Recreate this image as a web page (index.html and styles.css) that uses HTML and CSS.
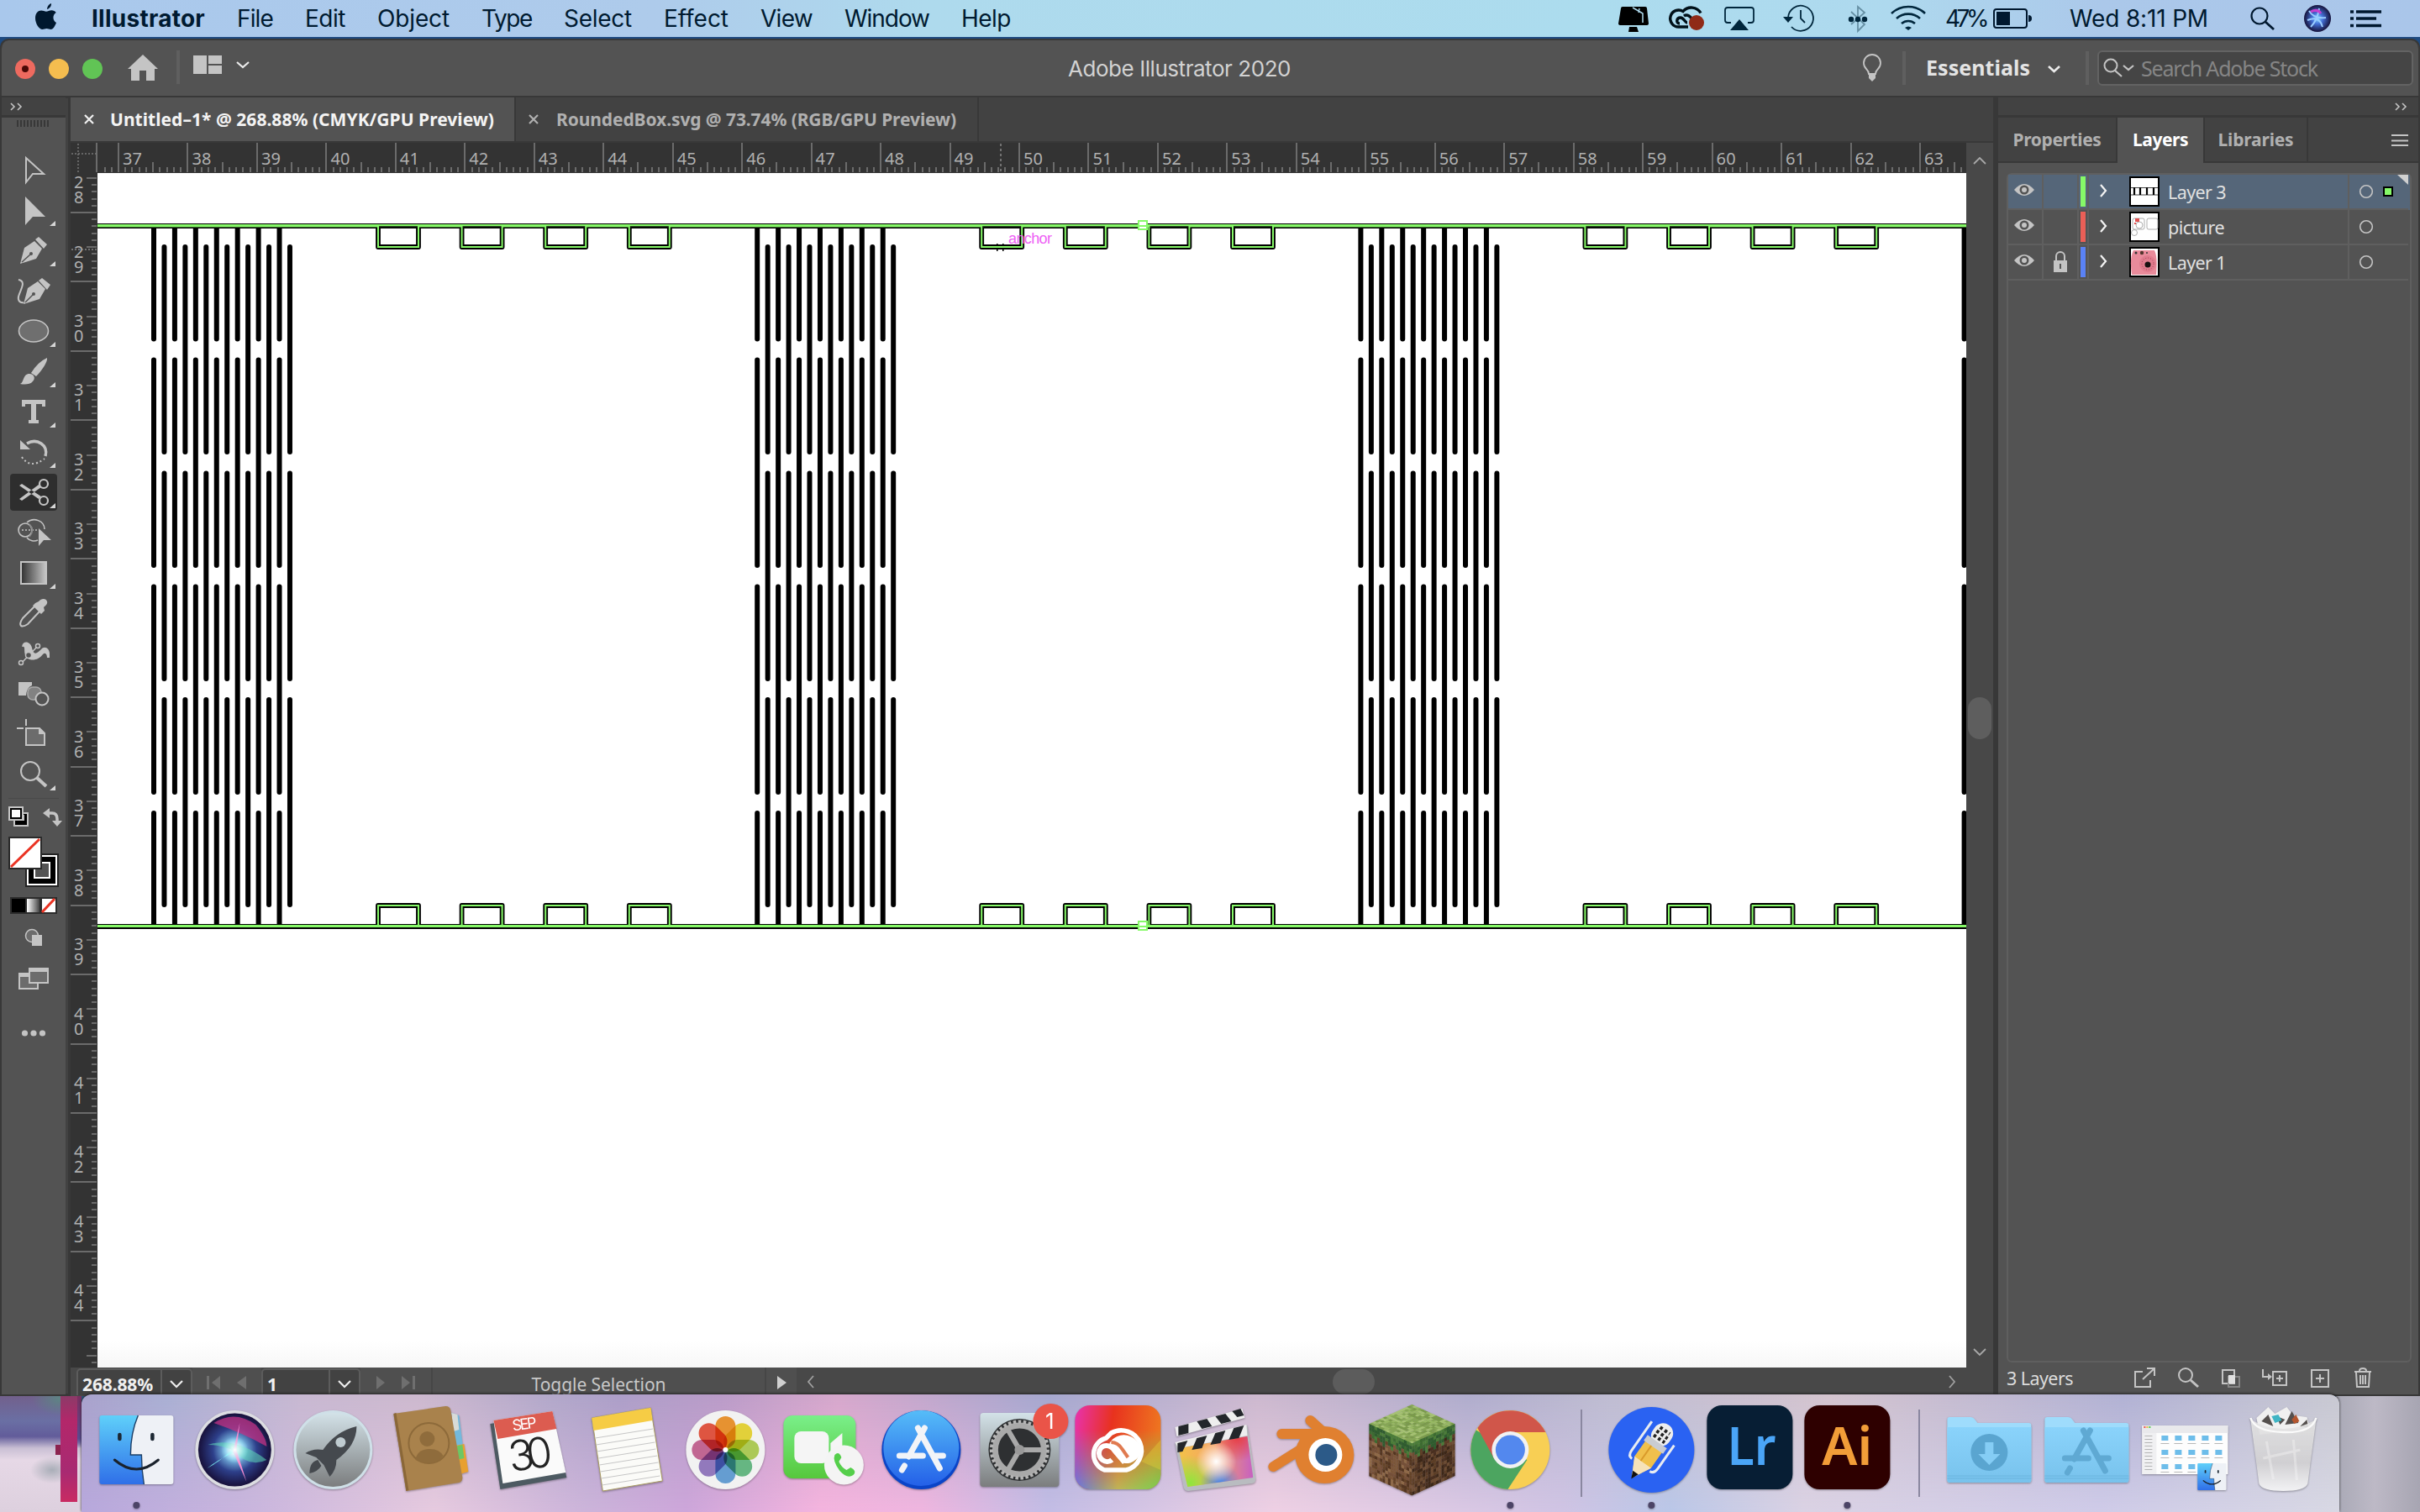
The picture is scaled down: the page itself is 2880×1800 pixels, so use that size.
FILE: index.html
```html
<!DOCTYPE html>
<html lang="en">
<head>
<meta charset="utf-8">
<title>Adobe Illustrator 2020</title>
<link rel="stylesheet" href="styles.css">
</head>
<body>
<header class="menubar">
  <svg class="apple" width="26" height="32" viewBox="42 4 26 32"><path d="M56 11c0-3 2-6 5-7 .4 3-2 6.500-5 7zM67 27c-2 5-4 8-6.500 8-2 0-3-1-5-1s-3 1-5 1c-4 0-8.500-7-8.500-13.500 0-6 3.500-9 7-9 2.500 0 4 1.200 6 1.200s3.500-1.400 6.500-1.400c2 0 4 1 5.200 2.700-4.700 3-4 9.500.3 12z" fill="#00182f"/></svg>
  <nav class="menus">
    <b data-w="135">Illustrator</b><span data-w="43">File</span><span data-w="48">Edit</span><span data-w="86">Object</span><span data-w="60">Type</span><span data-w="81">Select</span><span data-w="77">Effect</span><span data-w="62">View</span><span data-w="101">Window</span><span data-w="59">Help</span>
  </nav>
  <svg class="status" width="400" height="44" viewBox="1915 0 400 44">
    <path d="M1931 8h27q2 0 2 2l2 18q0 2-3 2h-30q-3 0-3-2l3-18q0-2 2-2zM1939 32h9l2 6h-12z" fill="#000"/>
    <path d="M1943 9l12 7v11m-4-17l-1 5" stroke="#aedaed" stroke-width="1.500" fill="none"/>
    <g fill="none" stroke="#001018" stroke-width="3.400"><path d="M2009 32h-11a10 10 0 1 1 5-18.500 13 13 0 0 1 21 2"/><path d="M2008 27c-3 0-4-6-8-6-5 0-6 7-1 7M2004 19c4-3 8 1 10 4"/></g>
    <circle cx="2019" cy="27" r="9" fill="#8f2a17"/>
    <path d="M2060 27h-4q-3 0-3-3v-12q0-3 3-3h28q3 0 3 3v12q0 3-3 3h-4" fill="none" stroke="#00263c" stroke-width="1.800"/><path d="M2059 36l11-13 11 13z" fill="#00263c"/>
    <path d="M2128 21a15 15 0 1 1 4 11M2143 12v10l5 5" fill="none" stroke="#00263c" stroke-width="1.800"/><path d="M2122 20h12l-6 7z" fill="#00263c"/>
    <path d="M2203 14l16 15-8 8V8l8 7-16 14" fill="none" stroke="#6690a4" stroke-width="1.800"/><g fill="#00263c"><circle cx="2203" cy="23" r="3.200"/><circle cx="2211" cy="23" r="3.200"/><circle cx="2219" cy="23" r="3.200"/></g>
    <g fill="none" stroke="#00263c" stroke-width="2.600"><path d="M2251 16a29 29 0 0 1 40 0M2257 22a21 21 0 0 1 28 0M2263 28a12 12 0 0 1 16 0"/></g><path d="M2267 33q4-3 8 0l-4 3z" fill="#00263c"/>
  </svg>
  <span class="pct" data-w="48">47%</span>
  <svg class="batt" width="46" height="26" viewBox="2372 9 46 26"><rect x="2373" y="11" width="39" height="22" rx="3" fill="none" stroke="#00182f" stroke-width="2"/><rect x="2376" y="14" width="16" height="16" fill="#00182f"/><path d="M2414 18q4 0 4 4t-4 4z" fill="#00182f"/></svg>
  <span class="clock" data-w="165">Wed 8:11 PM</span>
  <svg class="right" width="170" height="44" viewBox="2670 0 170 44">
    <circle cx="2689" cy="19" r="9.500" fill="none" stroke="#00182f" stroke-width="2.200"/><path d="M2696 26l10 9" stroke="#00182f" stroke-width="2.800"/>
    <defs><radialGradient id="sm"><stop offset="0" stop-color="#8ee4ff"/><stop offset=".4" stop-color="#4470d8"/><stop offset="1" stop-color="#15123a"/></radialGradient></defs>
    <circle cx="2758" cy="22" r="16" fill="url(#sm)"/><path d="M2748 13q6 10 20 8M2750 32q8-8 10-22M2746 24q14-6 18 8" stroke="#9cf" stroke-width="2" fill="none"/><path d="M2750 14q8-4 12 2" stroke="#c53fd0" stroke-width="3" fill="none"/>
    <path d="M2804 14h30M2804 22h24M2804 30.500h30M2797 14h4M2797 22h4M2797 30.500h4" stroke="#00182f" stroke-width="3.600"/>
  </svg>
</header>

<main class="window">
  <div class="titlebar">
    <svg class="tb-left" width="310" height="66" viewBox="0 48 310 66">
      <circle cx="30" cy="82" r="12" fill="#ee6a5f"/><circle cx="30" cy="82" r="4" fill="#4b0906"/><circle cx="70" cy="82" r="12" fill="#f5bd4f"/><circle cx="110" cy="82" r="12" fill="#61c455"/>
      <path d="M170 65l18 17h-4v14h-10V84h-8v12h-10V82h-4z" fill="#c4c4c4"/>
      <path d="M212 60v40" stroke="#5f5f5f" stroke-width="4"/>
      <path d="M230 66h16v22h-16zM248 66h16v10h-16zM248 78h16v10h-16z" fill="#c4c4c4"/>
      <path d="M282 74l7 6 7-6" fill="none" stroke="#ececec" stroke-width="2.200"/>
    </svg>
    <h1 data-w="265">Adobe Illustrator 2020</h1>
    <svg class="bulb" width="60" height="44" viewBox="2212 58 60 44"><path d="M2224 87q0-3-3-6-3-3-3-7a10 10 0 0 1 20 0q0 4-3 7-3 3-3 6z" fill="none" stroke="#c4c4c4" stroke-width="1.800"/><path d="M2224 86h8v6l-4 4-4-4z" fill="#c4c4c4"/><path d="M2266 60v40" stroke="#5f5f5f" stroke-width="4"/></svg>
    <b class="ess" data-w="124">Essentials</b>
    <svg class="esschev" width="60" height="44" viewBox="2430 58 60 44"><path d="M2438 78l6.500 6 6.500-6" fill="none" stroke="#ececec" stroke-width="2.600"/><path d="M2484 60v40" stroke="#5f5f5f" stroke-width="4"/></svg>
    <div class="search"><svg width="42" height="32" viewBox="2502 65 42 32"><circle cx="2512" cy="78" r="7.500" fill="none" stroke="#c4c4c4" stroke-width="2"/><path d="M2517 84l8 7M2527 78l6 5 6-5" fill="none" stroke="#c4c4c4" stroke-width="2.200"/></svg><span data-w="210">Search Adobe Stock</span></div>
  </div>
  <div class="work">
    <aside class="tools">
      <div class="phead"><svg width="16" height="10" viewBox="0 0 16 10"><path d="M1 1l4 4-4 4M9 1l4 4-4 4" fill="none" stroke="#c4c4c4" stroke-width="1.600"/></svg></div>
      <div class="grip"></div>
      <div class="toolgrid">
        <svg viewBox="2 179 76 48"><path d="M31 188v29l8-10h13z" fill="none" stroke="#c4c4c4" stroke-width="2"/></svg>
        <svg viewBox="2 227 76 48"><path d="M30 234v34l9-10h15z"/><path class="cn" d="M66 263v6h-7z"/></svg>
        <svg viewBox="2 275 76 48"><path d="M24 314l5-19 12-8 9 9-7 12zM42 285l4-3 10 9-4 5z"/><path d="M26 312l10-9" stroke="#535353" stroke-width="1.500"/><circle cx="37" cy="302" r="2" fill="#535353"/><path class="cn" d="M66 311v6h-7z"/></svg>
        <svg viewBox="2 323 76 48"><path d="M28 362l5-19 12-8 9 9-7 12zM46 334l4-3 10 8-4 6z"/><path d="M30 360l9-9" stroke="#535353" stroke-width="1.500"/><circle cx="40" cy="350" r="2" fill="#535353"/><path d="M22 333c10 2 2 12 0 20-1 5 2 8 6 7" fill="none" stroke="#c4c4c4" stroke-width="2"/></svg>
        <svg viewBox="2 371 76 48"><ellipse cx="40" cy="394" rx="17.500" ry="13" fill="#6f6f6f" stroke="#c4c4c4" stroke-width="1.600"/><path class="cn" d="M66 407v6h-7z"/></svg>
        <svg viewBox="2 419 76 48"><path d="M37 444q8-13 19-18c1 4-5 14-13 22zM24 457c5-2 3-12 11-12 5 0 8 5 4 9-3 4-10 4-15 3z"/><path class="cn" d="M66 455v6h-7z"/></svg>
        <svg viewBox="2 467 76 48"><path d="M26 476h28v8h-4v-3h-7v19h3v4h-12v-4h3v-19h-7v3h-4z"/><path class="cn" d="M66 503v6h-7z"/></svg>
        <svg viewBox="2 515 76 48"><path d="M54 543c4-13-10-22-22-15" fill="none" stroke="#c4c4c4" stroke-width="3.500"/><path d="M24 524v11h12z"/><path d="M26 544q10 15 27 2" fill="none" stroke="#c4c4c4" stroke-width="2" stroke-dasharray="2 3"/><path class="cn" d="M66 551v6h-7z"/></svg>
        <svg viewBox="2 563 76 48"><rect x="12" y="564" width="56" height="44" rx="4" fill="#2e2e2e"/><path d="M23 578l3-2 23 15-3 3zM23 594l3 2 23-16-3-3z"/><g fill="none" stroke="#c4c4c4" stroke-width="2.200"><circle cx="52" cy="576" r="5"/><circle cx="52" cy="596" r="5"/></g><path class="cn" d="M66 599v6h-7z"/></svg>
        <svg viewBox="2 611 76 48"><g fill="none" stroke="#c4c4c4" stroke-width="1.600"><circle cx="30" cy="631" r="8"/><path d="M32 622c8-7 21-2 21 8M32 640c3 4 9 5 13 3"/><path d="M26 631h18" stroke-dasharray="2 2"/><path d="M35 624q7 7 0 15" stroke="#858585"/></g><path d="M46 629v21l6-7h9z"/></svg>
        <svg viewBox="2 659 76 48"><defs><linearGradient id="gr"><stop stop-color="#303030"/><stop offset="1" stop-color="#c8c8c8"/></linearGradient></defs><rect x="25" y="669" width="30" height="26" fill="url(#gr)" stroke="#c4c4c4" stroke-width="2"/><path class="cn" d="M66 695v6h-7z"/></svg>
        <svg viewBox="2 707 76 48"><path d="M46 716c3-4 9-4 10 0 1 3-2 5-4 7l1 4-4 4-10-10 3-3z"/><path d="M41 722L27 736c-2 3-4 7-2 9 2 1 5 0 8-2l14-15" fill="none" stroke="#c4c4c4" stroke-width="2"/></svg>
        <svg viewBox="2 755 76 48"><path d="M26 770c1-8 10-7 12 1 2 10 6 7 11 2 4-5 10-1 10 5v5h-3c0-4-2-7-5-4-7 9-18 8-21 1-2-6 1-11-4-10z"/><g fill="#535353" stroke="#c4c4c4" stroke-width="1.500"><path d="M25 790l20-21" /><circle cx="25" cy="789" r="2.500"/><circle cx="45" cy="769" r="2.500"/><circle cx="34" cy="780" r="3.500"/></g></svg>
        <svg viewBox="2 803 76 48"><path d="M22 812h16v4q-6 2-7 12h-9z"/><rect x="33" y="818" width="16" height="15" rx="6" fill="#828282" stroke="#aaa" stroke-width="1.500"/><ellipse cx="50" cy="832" rx="7.500" ry="7.500" fill="#535353" stroke="#c4c4c4" stroke-width="2"/></svg>
        <svg viewBox="2 851 76 48"><path d="M31 867h16l6 6v14H31z" fill="#6c6c6c" stroke="#c4c4c4" stroke-width="2"/><path d="M46 866l8 8h-8zM20 866h8v2h-8zM30 856h2v8h-2z"/></svg>
        <svg viewBox="2 899 76 48"><circle cx="36" cy="918" r="11" fill="none" stroke="#c4c4c4" stroke-width="2"/><path d="M44 926l11 10" stroke="#c4c4c4" stroke-width="4"/><path class="cn" d="M66 935v6h-7z"/></svg>
      </div>
      <svg class="swatches" width="76" height="300" viewBox="2 947 76 300">
        <path d="M10 950.500h60" stroke="#4a4a4a" stroke-width="1"/>
        <rect x="17" y="968" width="16" height="15" fill="#000" stroke="#c4c4c4" stroke-width="2"/><rect x="11" y="961" width="16" height="15" fill="#c4c4c4" stroke="#c4c4c4" stroke-width="2"/><rect x="13" y="963" width="12" height="11" fill="#fff" stroke="#000" stroke-width="2"/><path d="M28 970v6h-6" stroke="#c4c4c4" stroke-width="2" fill="none"/>
        <path d="M57 968h5q6 0 6 7v3" fill="none" stroke="#c4c4c4" stroke-width="3.500"/><path d="M51 968l8-6v12zM62 977h12l-6 7z"/>
        <rect x="31" y="1017" width="38" height="38" fill="#000" stroke="#222" stroke-width="2"/><rect x="33" y="1019" width="34" height="34" fill="#000" stroke="#fff" stroke-width="2"/><rect x="41" y="1027" width="18" height="18" fill="#535353" stroke="#fff" stroke-width="2"/>
        <rect x="11" y="997" width="38" height="37" fill="#fff" stroke="#2a2a2a" stroke-width="2"/><path d="M13 1032L47 999" stroke="#ea3323" stroke-width="3"/>
        <rect x="12" y="1068" width="56" height="20" fill="#2c2c2c"/><path d="M14 1070h16v16H14z" fill="#000"/><path d="M32 1070h15v16H32z" fill="url(#gs)"/><path d="M50 1070h16v16H50z" fill="#fff"/><path d="M50 1086l15-16" stroke="#ea3323" stroke-width="3"/>
        <defs><linearGradient id="gs"><stop stop-color="#fff"/><stop offset="1" stop-color="#444"/></linearGradient></defs>
        <circle cx="38" cy="1114" r="7.500" fill="#6c6c6c" stroke="#c4c4c4" stroke-width="1.500"/><path d="M38 1113h12v13H38z"/>
        <path d="M23 1160h22v17H23z" fill="#6c6c6c" stroke="#c4c4c4" stroke-width="2"/><path d="M22 1158h14v5H22z"/><path d="M35 1153h22v17H35z" fill="#6c6c6c" stroke="#c4c4c4" stroke-width="2"/><path d="M34 1152h24v5H34z"/>
        <circle cx="29.500" cy="1230" r="3.600"/><circle cx="40" cy="1230" r="3.600"/><circle cx="50.500" cy="1230" r="3.600"/>
      </svg>
    </aside>
    <section class="doc">
      <div class="tabs">
        <div class="tab on"><svg width="14" height="14" viewBox="0 0 14 14"><path d="M2 2l10 10M12 2L2 12" stroke="#f0f0f0" stroke-width="2.200"/></svg><b data-w="457">Untitled–1* @ 268.88% (CMYK/GPU Preview)</b></div>
        <div class="tab"><svg width="14" height="14" viewBox="0 0 14 14"><path d="M2 2l10 10M12 2L2 12" stroke="#b0b0b0" stroke-width="2.200"/></svg><b data-w="476">RoundedBox.svg @ 73.74% (RGB/GPU Preview)</b></div>
      </div>
      <div class="body">
        <svg id="hruler" class="hruler" width="2256" height="36" viewBox="84 170 2256 36"></svg>
        <svg id="vruler" class="vruler" width="32" height="1422" viewBox="84 206 32 1422"></svg>
        <svg id="art" class="art" width="2224" height="1422" viewBox="116 206 2224 1422"></svg>
        <div class="vscroll">
          <svg width="16" height="10" viewBox="0 0 16 10"><path d="M1 9l7-7 7 7" fill="none" stroke="#a8a8a8" stroke-width="1.800"/></svg>
          <i></i>
          <svg width="16" height="10" viewBox="0 0 16 10"><path d="M1 1l7 7 7-7" fill="none" stroke="#a8a8a8" stroke-width="1.800"/></svg>
        </div>
      </div>
      <div class="statusbar">
        <div class="fld z"><b data-w="84">268.88%</b></div><div class="fld c"><svg width="16" height="10" viewBox="0 0 16 10"><path d="M1 1l7 7 7-7" fill="none" stroke="#eee" stroke-width="2.200"/></svg></div>
        <svg class="nav" width="82" height="32" viewBox="229 1628 82 32"><path d="M246 1638h3v16h-3zM262 1638v16l-10-8zM293 1638v16l-11-8z" fill="#6f6f6f"/></svg>
        <div class="fld n"><b>1</b></div><div class="fld c"><svg width="16" height="10" viewBox="0 0 16 10"><path d="M1 1l7 7 7-7" fill="none" stroke="#eee" stroke-width="2.200"/></svg></div>
        <svg class="nav" width="84" height="32" viewBox="429 1628 84 32"><path d="M448 1638v16l10-8zM478 1638v16l10-8zM491 1638h3v16h-3z" fill="#6f6f6f"/></svg>
        <div class="tog"><span data-w="160">Toggle Selection</span></div>
        <svg class="nav" width="36" height="32" viewBox="912 1628 36 32"><path d="M925 1638v16l11-8z" fill="#d0d0d0"/></svg>
        <div class="hscroll"><svg width="10" height="16" viewBox="0 0 10 16"><path d="M8 1L2 8l6 7" fill="none" stroke="#a0a0a0" stroke-width="1.800"/></svg><i></i><svg width="10" height="16" viewBox="0 0 10 16"><path d="M2 1l6 7-6 7" fill="none" stroke="#a0a0a0" stroke-width="1.800"/></svg></div>
      </div>
    </section>
    <aside class="panel">
      <div class="phead r"><svg width="16" height="10" viewBox="0 0 16 10"><path d="M1 1l4 4-4 4M9 1l4 4-4 4" fill="none" stroke="#c4c4c4" stroke-width="1.600"/></svg></div>
      <div class="ptabs"><b class="p1"><span data-w="105">Properties</span></b><b class="p2"><span data-w="66">Layers</span></b><b class="p3"><span data-w="90">Libraries</span></b><svg width="20" height="16" viewBox="0 0 20 16"><path d="M0 2h20M0 8.500h20M0 14h20" stroke="#c4c4c4" stroke-width="2"/></svg></div>
      <div class="list" id="list">
        <div class="row sel"><svg width="478" height="42" viewBox="2390 208 478 42"><use href="#cols"/><path d="M2476 210h6v36h-6z" fill="#86f968"/><path d="M2535 211h34v34h-34z" fill="#fff" stroke="#000" stroke-width="2"/><path d="M2536 223.500h32M2536 232h32" stroke="#444" stroke-width="1"/><path d="M2540 223v9M2547 223v9M2555 223v9M2563 223v9" stroke="#000" stroke-width="2.200"/><path d="M2837 223h10v10h-10z" fill="#86f968" stroke="#000" stroke-width="2"/><path d="M2853 208h13v12z" fill="#d0d0d0"/></svg><span data-w="69">Layer 3</span></div>
        <div class="row"><svg width="478" height="42" viewBox="2390 208 478 42"><use href="#cols"/><path d="M2476 210h6v36h-6z" fill="#ea5f57"/><path d="M2535 211h34v34h-34z" fill="#fff" stroke="#000" stroke-width="2"/><g fill="none" stroke="#999" stroke-width=".8"><rect x="2538" y="218" width="14" height="13" rx="2"/><circle cx="2546" cy="226" r="4"/><rect x="2555" y="218" width="13" height="13" rx="2"/><circle cx="2540" cy="235" r="3.500"/></g><path d="M2541 218h5v4h-5zM2540 223h2v2h-2z" fill="#e05050"/></svg><span data-w="67">picture</span></div>
        <div class="row"><svg width="478" height="42" viewBox="2390 208 478 42"><use href="#cols"/><path d="M2476 210h6v36h-6z" fill="#5a82f5"/><path d="M2444 226h16v14h-16z"/><path d="M2447 226v-5a5 5 0 0 1 10 0v5" fill="none" stroke="#c4c4c4" stroke-width="2"/><path d="M2451 230h2v6h-2z" fill="#555"/><path d="M2535 211h34v34h-34z" fill="#fff" stroke="#000" stroke-width="2"/><path d="M2539 214h25q4 8 2 29h-29q-3-20 2-29z" fill="#e98b9b"/><circle cx="2556" cy="230" r="10" fill="#e07c8e"/><circle cx="2556" cy="230" r="7" fill="none" stroke="#a03c50" stroke-width="1" stroke-dasharray="1 2"/><circle cx="2556" cy="231" r="3.500" fill="#181010"/><circle cx="2549" cy="217" r="2.200" fill="#51352c"/><circle cx="2542" cy="217" r="1.500" fill="#333"/><circle cx="2555" cy="217" r="1" fill="#333"/></svg><span data-w="69">Layer 1</span></div>
      </div>
      <div class="pfoot"><span data-w="79">3 Layers</span>
        <svg width="290" height="32" viewBox="2536 1624 290 32"><g fill="none" stroke="#c4c4c4" stroke-width="2"><path d="M2550 1633h-9v18h18v-8M2550 1642l13-12M2555 1629h9v9"/><circle cx="2601" cy="1637" r="8"/><path d="M2607 1643l9 8" stroke-width="3"/><path d="M2645 1631h14v16h-14z"/><path d="M2652 1639h13v12h-13z" stroke="#858585"/><path d="M2705 1633h16v16h-16zM2713 1637v8M2709 1641h8M2693 1630v9h8"/><path d="M2751 1631h20v20h-20zM2761 1636v10M2756 1641h10"/><path d="M2802 1633h20M2808 1632q0-3 4-3t4 3M2804 1634l1 17h14l1-17M2809 1637v11M2812 1637v11M2815 1637v11"/></g><path d="M2652 1637h8v10h-8z" fill="#e0e0e0"/><path d="M2699 1635l5 4-5 4z"/></svg>
      </div>
    </aside>
  </div>
</main>

<svg width="0" height="0" class="defs"><defs><g id="cols"><path d="M2431 208v40M2473 208v40M2485 208v40M2795 208v40" stroke="#5f5f5f" stroke-width="2"/><path d="M2388 249h478" stroke="#5f5f5f" stroke-width="2"/><path d="M2397 226q12-14 24 0-12 14-24 0z" fill="#c4c4c4"/><circle cx="2409" cy="226" r="5.500" fill="#535353"/><circle cx="2409" cy="226" r="3" fill="#c4c4c4"/><path d="M2500 220l6 7-6 7" fill="none" stroke="#f4f4f4" stroke-width="2.200"/><circle cx="2816" cy="228" r="7.300" fill="none" stroke="#c4c4c4" stroke-width="1.600"/></g>
<g id="finder"><path d="M-44-38q0-3 3-3H3q-8 26-8 46H9q-1 18 3 36h-53q-3 0-3-3z" fill="url(#fb)"/><path d="M2-41h39q3 0 3 3v76q0 3-3 3H9Q6 23 6 6H-7Q-7-20 2-41z" fill="#eef1f6"/><path d="M2-41Q-7-20-7 6H6q0 17 3 35" fill="none" stroke="#1d3f66" stroke-width="1.400"/><path d="M-20-18v5M19-18v5" stroke="#1c2733" stroke-width="4.500" stroke-linecap="round"/><path d="M-26 12Q0 34 26 12" stroke="#1a222c" stroke-width="3" fill="none" stroke-linecap="round"/></g>
<linearGradient id="fb" x2="0" y2="1"><stop stop-color="#5fd0fa"/><stop offset="1" stop-color="#2f6fe8"/></linearGradient>
<linearGradient id="gy" x2="0" y2="1"><stop stop-color="#d3e2e8"/><stop offset="1" stop-color="#7b7d7e"/></linearGradient>
<linearGradient id="bl" x2="0" y2="1"><stop stop-color="#56bdf8"/><stop offset="1" stop-color="#2460e8"/></linearGradient>
<linearGradient id="gn" x2="0" y2="1"><stop stop-color="#7aef8a"/><stop offset="1" stop-color="#56c83c"/></linearGradient>
<linearGradient id="fo" x2="0" y2="1"><stop stop-color="#8ad3fb"/><stop offset="1" stop-color="#78c2ec"/></linearGradient>
<linearGradient id="tr" x2="0" y2="1"><stop stop-color="#e8e8e8" stop-opacity=".9"/><stop offset=".6" stop-color="#d0cfd2"/><stop offset="1" stop-color="#f2f2f4"/></linearGradient>
<linearGradient id="cc" x2="1" y2=".15"><stop stop-color="#e832b0"/><stop offset=".45" stop-color="#e8321e"/><stop offset="1" stop-color="#ee7420"/></linearGradient>
<linearGradient id="cc2" x2="1" y2="0"><stop stop-color="#4a86f5"/><stop offset=".5" stop-color="#b8c860"/><stop offset="1" stop-color="#5fe05a"/></linearGradient>
<linearGradient id="fade" x2="0" y2="1"><stop offset=".3" stop-color="#000"/><stop offset="1" stop-color="#fff"/></linearGradient><mask id="mk" maskContentUnits="userSpaceOnUse"><rect x="-60" y="-60" width="120" height="120" fill="url(#fade)"/></mask>
<radialGradient id="si"><stop stop-color="#fff"/><stop offset=".25" stop-color="#7fc3ea"/><stop offset=".6" stop-color="#2d3f8a"/><stop offset="1" stop-color="#17103a"/></radialGradient>
<radialGradient id="glow"><stop stop-color="#fff"/><stop offset="1" stop-color="#bff" stop-opacity="0"/></radialGradient>
<g id="A" fill="none" stroke-width="7" stroke-linecap="round"><path d="M4-26L-15 8M-20 19l-3 5M-4-26L22 22M-26 7H2M14 7h12"/></g>
<g id="folder"><path d="M-50-36q0-3 3-3h25q3 0 5 3l3 4h61q3 0 3 3v65q0 3-3 3h-94q-3 0-3-3z" fill="#9fdcfc"/><path d="M-50-27H50v63q0 3-3 3h-94q-3 0-3-3z" fill="url(#fo)"/><path d="M-50 31H50M-50 34H50" stroke="#6bb4de"/></g>
</defs></svg>

<footer class="dock">
  <svg viewBox="-58.350 -66 116.700 140"><use href="#finder"/><circle class="dot" cy="66" r="4"/></svg>
  <svg viewBox="-58.350 -66 116.700 140"><circle r="47" fill="#dcdde2"/><circle r="43.500" fill="url(#si)"/><path d="M-25-32Q0-48 25-30 38-14 38-4 10-20-25-32z" fill="#c23384" opacity=".75"/><path d="M-33 22Q-10 10 2-8L4 2Q-12 6-33 22z" fill="#7ff0f4" opacity=".85"/><path d="M-32-6Q0-16 38 12 18 22 0 2-14-6-32-6z" fill="#5fd8b8" opacity=".55"/><path d="M6-32L2 0l12 38L-2 2z" fill="#f48cd0"/><circle r="16" fill="url(#glow)"/></svg>
  <svg viewBox="-58.350 -66 116.700 140"><circle r="47" fill="#cfe0e8"/><circle r="44" fill="url(#gy)"/><path d="M28-28Q3-22-12 0q-12-2-21 4l13 5 9 9 7 14q8-8 8-20Q28-5 28-28zM-18 12q-10 2-10 16 10-2 14-9z" fill="#45494e"/><circle cx="9" cy="-9" r="6" fill="#bfcbd0"/></svg>
  <svg viewBox="-58.350 -66 116.700 140"><path d="M25-44l9 3 8 65-7 6z" fill="#74b9dc"/><path d="M25-44l7 2 2 18-7 2z" fill="#d8dbd8"/><path d="M30-5l10-2 5 33-10 3z" fill="#e8a030"/><path d="M29-4l9-2 2 16-9 2z" fill="#6cc764"/><path d="M-44-43L18-52q5 0 6 5l14 80q0 5-4 6l-63 10z" fill="#a9824c"/><path d="M-29 49l-15-92 3-1 15 92z" fill="#8a6738"/><circle cx="-2" cy="-8" r="24" fill="none" stroke="#8d6a3a" stroke-width="2"/><circle cx="-4" cy="-13" r="9" fill="#8f6c3c"/><path d="M-18 12q2-12 15-13t18 8q-10 14-33 5z" fill="#8f6c3c"/></svg>
  <svg viewBox="-58.350 -66 116.700 140"><path d="M-46-31L28-43l17 76-79 14z" fill="#4d5a62"/><path d="M-42-35L28-46l16 73-75 13z" fill="#fafafa"/><path d="M-42-35L28-46l5 21-70 12z" fill="#dc5c50"/><g transform="rotate(-8)" text-anchor="middle" font-family="Inter"><text x="-1" y="-25" font-size="18" fill="#fff" textLength="29">SEP</text><text x="1" y="23" font-size="50" fill="#222" font-weight="300" textLength="52">30</text></g></svg>
  <svg viewBox="-58.350 -66 116.700 140"><path d="M-42-38L28-50 42 37-29 49z" fill="#fbfbf8" stroke="#a99c60"/><path d="M-42-38L28-50l2 15-70 12z" fill="#f6cc45"/><path d="M-38-14l69-11M-37-6l69-11M-36 2l69-11M-34 10l68-11M-33 18l69-11M-32 26l69-11M-31 34l69-11M-30 42l69-11" stroke="#c6c6c6"/></svg>
  <svg viewBox="-58.350 -66 116.700 140"><circle r="47" fill="#f2f2f2"/><g class="petals"><rect x="-12" y="-40" width="24" height="38" rx="12" fill="#f39a33"/><rect x="-12" y="-40" width="24" height="38" rx="12" fill="#efdc3d" transform="rotate(45)"/><rect x="-12" y="-40" width="24" height="38" rx="12" fill="#b5d45c" transform="rotate(90)"/><rect x="-12" y="-40" width="24" height="38" rx="12" fill="#6bc089" transform="rotate(135)"/><rect x="-12" y="-40" width="24" height="38" rx="12" fill="#6aa6dd" transform="rotate(180)"/><rect x="-12" y="-40" width="24" height="38" rx="12" fill="#9a80c6" transform="rotate(225)"/><rect x="-12" y="-40" width="24" height="38" rx="12" fill="#cc6b9a" transform="rotate(270)"/><rect x="-12" y="-40" width="24" height="38" rx="12" fill="#ea5944" transform="rotate(315)"/></g><circle r="3" fill="#fff"/></svg>
  <svg viewBox="-58.350 -66 116.700 140"><rect x="-47" y="-41" width="86" height="75" rx="11" fill="url(#gn)"/><rect x="-34" y="-22" width="41" height="38" rx="8" fill="#f5f5f5"/><path d="M9-8L23-20v30L9 4z" fill="#f5f5f5"/><circle cx="25" cy="18" r="23.500" fill="#f4f4f4"/><path d="M14 6q5-5 8 3l-3 5q3 7 9 10l5-3q8 4 3 9-7 5-16-5-9-12-6-19z" fill="#55cf4b"/></svg>
  <svg viewBox="-58.350 -66 116.700 140"><circle r="47" fill="#0a44c8"/><circle cy="-2" r="45" fill="url(#bl)"/><use href="#A" stroke="#f2f4f8"/></svg>
  <svg viewBox="-58.350 -66 116.700 140"><rect x="-47" y="-44" width="94" height="88" rx="4" fill="url(#gy)"/><circle r="37" fill="#2e3032"/><circle r="29" fill="none" stroke="#a9a9a9" stroke-width="7"/><circle r="33.500" fill="none" stroke="#b5b5b5" stroke-width="4" stroke-dasharray="3.500 2.500"/><path d="M0 0h27M0 0l-14-24M0 0l-14 24" stroke="#a9a9a9" stroke-width="6"/><circle r="6" fill="#999"/><circle cx="37" cy="-34" r="21" fill="#ea5448"/><text x="36" y="-25" font-family="Inter" font-size="26" fill="#fff" text-anchor="middle">1</text></svg>
  <svg viewBox="-58.350 -66 116.700 140"><rect x="-51" y="-53" width="102" height="100" rx="18" fill="url(#cc)"/><rect x="-51" y="-53" width="102" height="100" rx="18" fill="url(#cc2)" mask="url(#mk)"/><path d="M51-12v36L28 14z" fill="#e8d83a" opacity=".35"/><path d="M-8-20a24 24 0 1 1 18 44H-16A20 20 0 0 1-14-14z" fill="none" stroke="#fff" stroke-width="5.500" stroke-linejoin="round"/><path d="M-10-8A20 20 0 0 1 27 0 17 17 0 0 1 8 16Q2 12-2 4z" fill="#fff"/><path d="M-7 12C-14 18-25 10-22 1c3-8 13-8 18 0L8 15" fill="none" stroke="#fff" stroke-width="6"/><path d="M-8-9Q0-9 5-1l7 10" fill="none" stroke="#e07a50" stroke-width="4"/></svg>
  <svg viewBox="-58.350 -66 116.700 140"><defs><linearGradient id="fc"><stop stop-color="#f3cf3d"/><stop offset=".5" stop-color="#f4a266"/><stop offset="1" stop-color="#b74ae0"/></linearGradient><radialGradient id="fw"><stop stop-color="#fff"/><stop offset="1" stop-color="#fff" stop-opacity="0"/></radialGradient><radialGradient id="fr"><stop stop-color="#e83a40"/><stop offset="1" stop-color="#e83a40" stop-opacity="0"/></radialGradient><radialGradient id="fg"><stop stop-color="#8fe63c"/><stop offset="1" stop-color="#8fe63c" stop-opacity="0"/></radialGradient><radialGradient id="fu"><stop stop-color="#3f86f0"/><stop offset="1" stop-color="#3f86f0" stop-opacity="0"/></radialGradient><clipPath id="fk"><path d="M-44-2L38-16l7 49-78 11z"/></clipPath></defs><path d="M-48-8L38-29l10 64q0 4-4 5l-76 9q-5 0-6-5z" fill="#b9bcc0"/><g clip-path="url(#fk)"><path d="M-60-30h120v90h-120z" fill="url(#fc)"/><circle cx="26" cy="-16" r="30" fill="url(#fr)"/><circle cx="-30" cy="40" r="34" fill="url(#fg)"/><circle cx="6" cy="40" r="24" fill="url(#fu)"/><circle cx="1" cy="14" r="24" fill="url(#fw)"/></g><path d="M-48-27L32-49l3 11-81 22z" fill="#eee"/><path d="M-48-9L37-30l1 13-82 15z" fill="#eee"/><path d="M-44-28l12-3 0 11-12 3zM-22-34l12-3 6 9-12 3zM0-40l12-3 7 9-12 3zM20-46l10-3 4 8-8 2zM-45-8l12-3-6 13-6 1zM-22-14l12-3-6 15-12 2zM0-20l12-3-6 15-12 2zM22-26l12-3-6 15-12 2z" fill="#23262a"/></svg>
  <svg viewBox="-58.350 -66 116.700 140"><g stroke="#e08030" stroke-linecap="round" stroke-width="12" fill="none"><path d="M-4-35L28-6M-38-19H10M-48 20L6-14"/></g><path d="M-15-20H20L-12 0z" fill="#e08030"/><ellipse cx="13" cy="6" rx="35" ry="34" fill="#e08030"/><circle cx="14" cy="6" r="20" fill="#fff"/><circle cx="15" cy="6" r="13" fill="#2c5a88"/></svg>
  <svg id="block" viewBox="-58.350 -66 116.700 140"></svg>
  <svg viewBox="-58.350 -66 116.700 140"><circle r="47" fill="#f8cf54"/><path d="M0 0L-40.700-23.500A47 47 0 0 0-3 47L20 12z" fill="#4ca560"/><path d="M0 0L-19 11-39-26A47 47 0 0 1 42-21H0z" fill="#d0564a"/><circle r="22" fill="#f2f2f2"/><circle r="17.500" fill="#5388ee"/><circle class="dot" cy="66" r="4"/></svg>
  <i class="sep"></i>
  <svg viewBox="-58.350 -66 116.700 140"><circle r="51" fill="#2a62f2"/><g transform="rotate(35)"><path d="M-12-6h24v24L0 41l-12-23z" fill="#f0c04c"/><path d="M-12 18h24L0 41z" fill="#f6e2ba"/><path d="M-4 33h8L0 42z" fill="#111"/><path d="M-3-6v24" stroke="#d99a2a" stroke-width="2"/><rect x="-12" y="-36" width="24" height="28" rx="12" fill="#eee"/><path d="M-7-28h14M-8-22h16M-8-16h16" stroke="#222" stroke-width="4" stroke-dasharray="3.500 3"/><rect x="-14" y="-12" width="28" height="8" fill="#c9ccd2"/><path d="M-19-28v42q0 8 6 8M19-20v34q0 8-6 8" fill="none" stroke="#e8ecf2" stroke-width="3"/></g><circle class="dot" cy="66" r="4"/></svg>
  <svg viewBox="-58.350 -66 116.700 140"><rect x="-51" y="-53" width="102" height="100" rx="18" fill="#071e34"/><text x="2" y="18" text-anchor="middle" font-family="Noto Sans" font-weight="600" font-size="64" textLength="58" lengthAdjust="spacingAndGlyphs" fill="#4aa5f7">Lr</text></svg>
  <svg viewBox="-58.350 -66 116.700 140"><rect x="-51" y="-53" width="102" height="100" rx="18" fill="#2e0000"/><text x="0" y="18" text-anchor="middle" font-family="Noto Sans" font-weight="600" font-size="64" textLength="60" lengthAdjust="spacingAndGlyphs" fill="#f29d38">Ai</text><circle class="dot" cy="66" r="4"/></svg>
  <i class="sep"></i>
  <svg viewBox="-58.350 -66 116.700 140"><use href="#folder"/><circle cy="3" r="22" fill="#5aa5d0"/><path d="M-5-9H5V5h8L0 18-13 5h8z" fill="#85cdf5"/></svg>
  <svg viewBox="-58.350 -66 116.700 140"><use href="#folder"/><use href="#A" y="3" stroke="#5fa9d3"/></svg>
  <svg id="winthumb" viewBox="-58.350 -66 116.700 140"></svg>
  <svg viewBox="-58.350 -66 116.700 140"><path d="M-32-38l14-13 8 8 14-8 8 10 16 2 4 13-60 8z" fill="#f0f0f0"/><path d="M-26-34l8-8 6 14zM2-30l8-16 8 14zM-8-40l10 4-6 6zM20-28l8-8 2 10z" fill="#55504e"/><path d="M-14-40l8-2 4 7-8 3z" fill="#3fb4c4"/><path d="M10-36l5-6 4 8-6 3z" fill="#b4552e"/><path d="M-39-36Q0-14 39-36L29 40Q26 49 0 49t-29-9z" fill="url(#tr)"/><path d="M-39-38Q-34-22 0-21t39-17" fill="none" stroke="#fafafa" stroke-width="2.500"/><path d="M-20-10l8 45M12-12l4 48M-24 10L20 0" stroke="#fff" stroke-width="3" opacity=".3"/></svg>
</footer>
<script src="app.js"></script>
</body>
</html>
```
FILE: styles.css
```css
* { box-sizing: border-box; }
body { margin: 0; width: 2880px; height: 1800px; overflow: hidden; position: relative; display: flex; flex-direction: column; font-family: "Noto Sans", "Open Sans", sans-serif;
  background: linear-gradient(#8c3a68, #b3276a 30px, #a82a72 90px, #c92a62) 72px 1662px / 20px 126px no-repeat,
    linear-gradient(#8c2350, #8c2350) 66px 1720px / 8px 12px no-repeat,
    linear-gradient(#7a2f60, #5a4a90 50px, transparent 62px) 92px 1662px / 5px 138px no-repeat,
    radial-gradient(ellipse at 62px 1750px, #a9aeb8, transparent 26px),
    radial-gradient(ellipse at 72px 1665px, #5d8584, transparent 34px),
    linear-gradient(#72608c, #6a6fa4 30px, #625c9a 48px, #c9bfd4 62px, #e6d8e6 76px, #ddd0de) 0 1662px / 97px 138px no-repeat,
    linear-gradient(90deg, #a9a9b6, #bdb9c6 46px, #a7a5b2) 2780px 1662px / 100px 138px no-repeat, #1e4a80; }
svg { display: block; flex: none; }
.work svg { fill: #c4c4c4; }
.defs { position: absolute; }
[data-w] { display: inline-block; white-space: nowrap; flex: none; }

.menubar { height: 44px; flex: none; display: flex; align-items: center; padding-left: 42px; font: 28px "Inter", sans-serif; color: #001a30; background: linear-gradient(90deg, #a9c8ec, #aecbeb 780px, #aedaed 1100px, #acdcee 1900px, #aed9ee 2250px, #abc8ea 2500px, #aac6ea); }
.apple { margin-top: -4px; }
.menus { display: flex; gap: 38px; margin-left: 41px; width: 1138px; }
.status { margin-left: 668px; }
.batt { margin-left: 9px; }
.clock { margin-left: 45px; }
.right { margin-left: 42px; }

.window { height: 1616px; margin-top: 2px; flex: none; background: #383838; border-radius: 10px 10px 0 0; padding: 2px; display: flex; flex-direction: column; }
.titlebar { height: 66px; margin: 0 -2px; background: #535353; border-radius: 10px 10px 0 0; display: flex; align-items: center; color: #e4e4e4; border: solid #3a3a3a; border-width: 0 2px; flex: none; }
.tb-left { margin-left: -2px; }
h1 { margin: 0 0 0 961px; font: 26px "Inter", sans-serif; color: #d2d2d2; }
.bulb { margin-left: 676px; }
.ess { margin: -3px 0 0 20px; font-size: 25px; }
.esschev { margin-left: 14px; }
.search { margin-left: 6px; width: 376px; height: 42px; border: 2px solid #636363; border-radius: 6px; background: #454545; display: flex; align-items: center; padding-left: 4px; gap: 4px; color: #858585; font-size: 25px; }

.work { flex: 1; display: flex; padding-top: 2px; min-height: 0; }
.tools { width: 76px; background: #535353; margin-right: 6px; box-shadow: 4px 0 0 -1px #424242; }
.phead { height: 24px; background: #424242; border-bottom: 3px solid #383838; padding: 6px 10px; }
.phead.r { display: flex; justify-content: flex-end; padding-right: 12px; }
.grip { margin: 3px 18px 0; height: 8px; background: repeating-linear-gradient(90deg, #383838 0 2px, transparent 2px 4px); }
.toolgrid { display: grid; grid-auto-rows: 48px; margin-top: 28px; }
.toolgrid svg { width: 76px; height: 48px; }
.toolgrid .cn { fill: #d6d6d6; }

.doc { width: 2288px; display: flex; flex-direction: column; flex: none; background: #424242; }
.tabs { display: flex; height: 54px; border-bottom: 2px solid #383838; font-size: 21px; flex: none; }
.tab { display: flex; align-items: center; padding-left: 14px; width: 551px; gap: 20px; color: #b0b0b0; border-right: 2px solid #383838; }
.tab.on { width: 530px; background: #535353; color: #f4f4f4; padding-left: 15px; gap: 18px; }
.body { display: grid; grid-template: 36px 1422px / 32px 2224px 32px; }
.hruler { grid-column: 1 / 3; background: #333; }
.vruler { background: #333; grid-row: 2; }
.art { background: linear-gradient(#fff 0 1390px, #f7f7f7); }
.vscroll { grid-column: 3; grid-row: 1 / 3; background: #484848; display: flex; flex-direction: column; align-items: center; padding: 16px 0 13px; justify-content: space-between; position: relative; }
.vscroll i { position: absolute; top: 660px; width: 28px; height: 50px; border-radius: 14px; background: #5e5e5e; }
.statusbar { height: 34px; display: flex; background: #484848; padding-left: 7px; color: #f0f0f0; font-size: 21px; flex: none; }
.statusbar > * { height: 32px; }
.fld { background: #424242; border: solid #5c5c5c; border-width: 2px 2px 0 2px; display: flex; align-items: center; padding-top: 3px; border-radius: 5px 0 0 0; margin-top: 1px; }
.z { width: 102px; padding-left: 5px; }
.c { width: 36px; border-left: 0; justify-content: center; border-radius: 0 5px 0 0; }
.n { width: 82px; padding-left: 5px; }
.nav, .tog { background: #4f4f4f; }
.tog { width: 399px; text-align: center; line-height: 40px; color: #c8c8c8; border: solid #464646; border-width: 0 2px; }
.hscroll { flex: 1; display: flex; justify-content: space-between; align-items: center; padding: 2px 44px 0 12px; position: relative; }
.hscroll i { position: absolute; left: 638px; top: 2px; width: 50px; height: 30px; border-radius: 15px; background: #5c5c5c; }

.panel { width: 500px; margin-left: 6px; background: #535353; display: flex; flex-direction: column; flex: none; }
.ptabs { display: flex; height: 54px; background: #424242; font-size: 21px; color: #b0b0b0; align-items: stretch; border-bottom: 2px solid #383838; }
.ptabs b { border-right: 2px solid #383838; display: flex; align-items: center; justify-content: center; padding-bottom: 1px; }
.ptabs > svg { margin: 19px 12px 0 auto; }
.p1 { width: 142px; }
.ptabs .p2 { width: 102px; background: #535353; color: #fff; border: 0; margin-bottom: -2px; padding-bottom: 3px; }
.ptabs .p3 { width: 125px; border-left: 2px solid #383838; }
.list { margin: 12px 10px 0 10px; height: 1416px; border: 2px solid #5f5f5f; border-radius: 6px; width: 482px; font-size: 21.500px; color: #e0e0e0; }
.row { height: 42px; display: grid; }
.row > * { grid-area: 1 / 1; }
.row span { margin-left: 190px; line-height: 41px; justify-self: start; }
.row.sel { background: #556679; }
.pfoot { display: flex; align-items: center; padding: 0 0 0 10px; color: #dcdcdc; font-size: 21.500px; height: 36px; gap: 69px; }

.dock { position: absolute; left: 97px; top: 1660px; width: 2687px; height: 140px; display: flex; padding-left: 7px; border-radius: 12px 12px 0 0; box-shadow: 0 -1px 3px #222; overflow: hidden;
  background: linear-gradient(90deg, #a9a2cc, #aab0d4 100px, #c8b9d2 260px, #cdb9cf 400px, #b2a8ca 560px, #ad9fc8 640px, #ba9cc8 760px, #d6a8cc 900px, #a6a8cf 1150px, #cdb9cf 1400px, #b0adcd 1650px, #c0bdd2 1820px, #d4c4cf 2080px, #b2b2d4 2430px, #c9c9d2 2687px); }
.dock::before { content: ""; position: absolute; inset: 0; background: linear-gradient(90deg, #b8a8dc, #c9b5dd 200px, #e6cadf 420px, #ccb4da 600px, #cda6da 720px, #f4b4de 880px, #efb6df 1000px, #c3bde5 1150px, #eed0e4 1420px, #d0c4e4 1760px, #bac7e8 1890px, #dad2e4 2050px, #cfcbe8 2400px, #d8d8e4 2687px); mask-image: linear-gradient(transparent, #000); }
.dock svg { width: 116.750px; height: 140px; position: relative; filter: drop-shadow(0 1px 1px #0005); }
.dock .dot { fill: #4c4466; }
.petals rect { mix-blend-mode: multiply; }
.sep { width: 51.500px; flex: none; position: relative; background: linear-gradient(#8a87a0, #8a87a0) 26px 18px / 2px 104px no-repeat; }
```
FILE: app.js
```js
// Letter-spacing tuned so each label fills its slot.
document.querySelectorAll('[data-w]').forEach(function (el) {
  var w = +el.dataset.w, n = el.textContent.length;
  el.style.letterSpacing = (w - el.getBoundingClientRect().width) / n + 'px';
  el.style.width = w + 'px';
});

var UNIT = 82.46;
function line(x1, y1, x2, y2, c, w, extra) {
  return '<line x1="' + x1 + '" y1="' + y1 + '" x2="' + x2 + '" y2="' + y2 + '" stroke="' + c + '" stroke-width="' + w + '" ' + (extra || '') + '/>';
}
function rect(x, y, w, h, c) {
  return '<rect x="' + x + '" y="' + y + '" width="' + w + '" height="' + h + '" fill="' + c + '"/>';
}

// Horizontal ruler
var s = '', n, i, x, y;
for (n = 36; n <= 63; n++) {
  x = 141 + UNIT * (n - 37);
  if (n > 36) {
    s += rect(Math.round(x) - 1, 170, 2, 35, '#6b6b6b');
    s += '<text x="' + (x + 5) + '" y="196" font-size="20" fill="#b0b0b0" textLength="23">' + n + '</text>';
  }
  for (i = 1; i < 10; i++) {
    var tx = Math.round(x + UNIT * i / 10);
    if (tx > 116) s += rect(tx - 1, i === 5 ? 193 : 199, 2, i === 5 ? 12 : 6, '#6b6b6b');
  }
}
s += rect(114, 170, 2, 35, '#6b6b6b');
s += line(93, 171, 93, 205, '#777', 1.5, 'stroke-dasharray="2 2"') + line(85, 183, 115, 183, '#777', 1.5, 'stroke-dasharray="2 2"');
s += line(1191, 171, 1191, 205, '#888', 1.5, 'stroke-dasharray="3 3"');
document.getElementById('hruler').innerHTML = s;

// Vertical ruler
s = '';
for (n = 28; n <= 45; n++) {
  y = 253 + UNIT * (n - 29);
  s += rect(84, Math.round(y) - 1, 31, 2, '#6b6b6b');
  if (n < 45) {
    s += '<text x="88" y="' + (y + 53.5) + '" font-size="20" fill="#b0b0b0">' + String(n)[0] + '</text>';
    s += '<text x="88" y="' + (y + 71.5) + '" font-size="20" fill="#b0b0b0">' + String(n)[1] + '</text>';
  }
  for (i = 1; i < 10; i++) s += rect(i === 5 ? 103 : 109, Math.round(y + UNIT * i / 10) - 1, i === 5 ? 12 : 6, 2, '#6b6b6b');
}
s += line(85, 297, 115, 297, '#888', 1.5, 'stroke-dasharray="2 2"');
document.getElementById('vruler').innerHTML = s;

// Box panels: hinge slits, edge lines and finger tabs
var G = '#86f968', a = '', g = '', PERIOD = 718.2;
var even = [[271, 403.5], [428.5, 673], [698.5, 943], [968, 1102]];
var odd = [[294, 538], [563.5, 808], [833, 1077]];
for (var k = 0; k < 4; k++) {
  for (i = 0; i < 14; i++) {
    x = 183 + PERIOD * k + 12.46 * i;
    (i % 2 ? odd : even).forEach(function (r) {
      a += line(x, r[0], x, r[1], '#000', 6, 'stroke-linecap="round"');
    });
  }
}
a += rect(116, 266, 2224, 6, '#000') + rect(116, 1100, 2224, 6, '#000');
g += rect(116, 267, 2224, 3.4, G) + rect(116, 1101, 2224, 3, G);
for (k = 0; k < 3; k++) {
  for (i = 0; i < 4; i++) {
    x = 450 + PERIOD * k + 99.6 * i;
    var d = 'M' + x + ' 269V294H' + (x + 48) + 'V269M' + x + ' 1103V1078H' + (x + 48) + 'V1103';
    a += '<path d="' + d + '" fill="none" stroke="#000" stroke-width="5.800" stroke-linejoin="round"/>';
    g += '<path d="' + d + '" fill="none" stroke="' + G + '" stroke-width="2"/>';
    g += rect(x + 1, 269.3, 46, 1.5, '#000');
  }
}
[262, 1096].forEach(function (t) {
  g += '<rect x="1355" y="' + (t + 1) + '" width="10" height="10" fill="#fff" stroke="' + G + '" stroke-width="2"/>' + rect(1354, t + 6, 12, 2, G);
});
g += rect(1186, 290, 1.5, 2, '#000') + rect(1193, 290, 1.5, 2, '#000') + rect(1186, 297, 1.5, 2, '#000') + rect(1193, 297, 1.5, 2, '#000');
g += '<text x="1200" y="290" font-family="Liberation Sans" font-size="18" fill="#ee62f5" textLength="52">anchor</text>';
document.getElementById('art').innerHTML = a + g;

// Grass block in the dock
var seed = 7;
function rnd() { seed = (seed * 16807) % 2147483647; return seed / 2147483647; }
function pick(l) { return l[Math.floor(rnd() * l.length)]; }
function face(m, dirt, green) {
  var o = '<g transform="matrix(' + m + ')">';
  for (var r = 0; r < 16; r++) for (var c = 0; c < 16; c++) {
    var isG = green === 2 || (green === 1 && r < 3 + (c * 7 % 3));
    o += rect(c, r, 1.06, 1.06, isG ? pick(green === 2 ? ['#86a952', '#98ba62', '#7a9c48', '#a6c471'] : ['#3d6b30', '#4b7d38', '#2f5c2e']) : pick(dirt));
  }
  return o + '</g>';
}
document.getElementById('block').innerHTML =
  face('3.19,1.45,-3.19,1.45,0,-54', [], 2) +
  face('3.19,1.45,0,3.87,-51,-31', ['#7b5638', '#654428', '#8f6a48', '#543620', '#755038'], 1) +
  face('3.19,-1.45,0,3.87,0,-7.8', ['#5c3e26', '#4a3020', '#6d4c32', '#3d2818'], 1);

// Minimised Finder window
var w = rect(-51, -29, 102, 58, '#fdfdfd') + rect(-51, -29, 17, 58, '#f0f0f2') + rect(-51, -29, 102, 9, '#e9e9ec');
w += rect(-49, -28, 2, 2, '#e55') + rect(-46, -28, 2, 2, '#eb4') + rect(-43, -28, 2, 2, '#5c5');
for (i = 0; i < 11; i++) w += rect(-48, -17 + i * 4, 9, 1, '#b5b5b5');
for (i = 0; i < 15; i++) {
  x = -28 + (i % 5) * 16; y = -17 + Math.floor(i / 5) * 17;
  w += rect(x, y, 8, 6, '#6dbdea') + rect(x - 1, y + 9, 10, 1, '#b8b8b8');
}
w += '<use href="#finder" transform="translate(32 32) scale(.39)"/>';
document.getElementById('winthumb').innerHTML = w;
```
